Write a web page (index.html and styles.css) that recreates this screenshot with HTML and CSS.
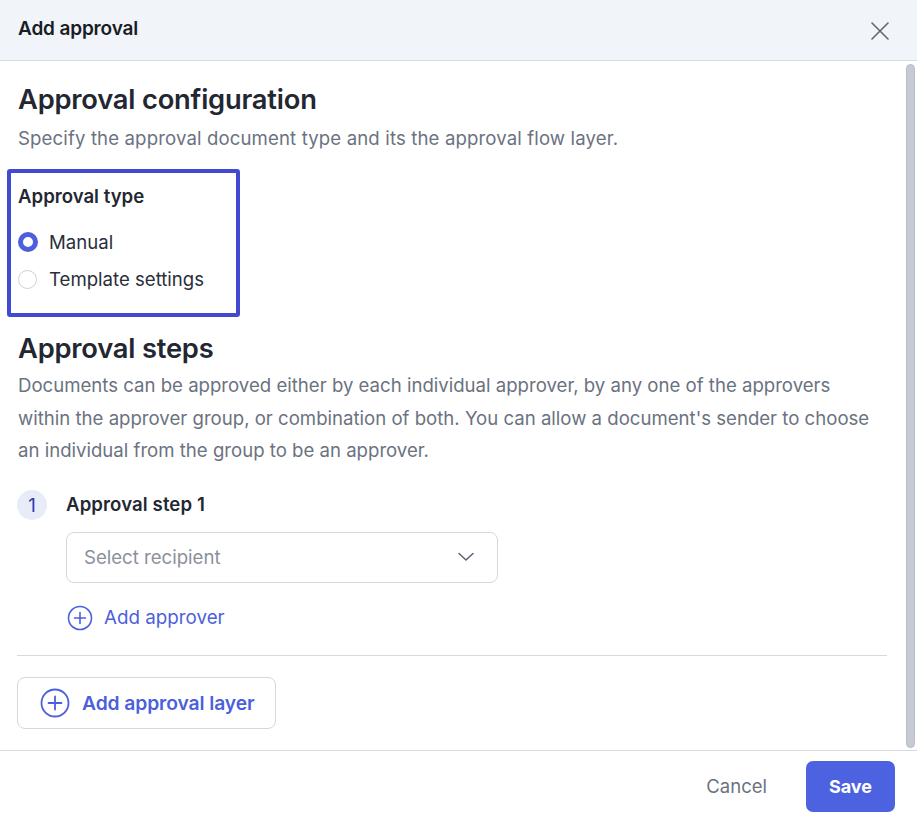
FILE: index.html
```html
<!DOCTYPE html>
<html>
<head>
<meta charset="utf-8">
<link rel="stylesheet" href="styles.css">
</head>
<body>
<div class="dialog">
  <header class="head">
    <div class="title">Add approval</div>
    <svg class="close" width="20" height="20" viewBox="0 0 20 20"><path d="M2 2 L18 18 M18 2 L2 18" stroke="#5f6673" stroke-width="1.6" fill="none" stroke-linecap="round"/></svg>
  </header>
  <div class="body">
    <main class="content">
      <h2 class="h">Approval configuration</h2>
      <p class="sub">Specify the approval document type and its the approval flow layer.</p>
      <div class="typebox">
        <div class="label">Approval type</div>
        <div class="radio"><span class="dot on"></span><span>Manual</span></div>
        <div class="radio"><span class="dot"></span><span>Template settings</span></div>
      </div>
      <h2 class="h h2">Approval steps</h2>
      <p class="desc">Documents can be approved either by each individual approver, by any one of the approvers within the approver group, or combination of both. You can allow a document's sender to choose an individual from the group to be an approver.</p>
      <div class="step">
        <div class="num">1</div>
        <div class="stepcol">
          <div class="steptitle">Approval step 1</div>
          <div class="select"><span>Select recipient</span>
            <svg width="18" height="10" viewBox="0 0 18 10"><path d="M2 1.5 L9 8 L16 1.5" stroke="#5f6673" stroke-width="1.6" fill="none" stroke-linecap="round" stroke-linejoin="round"/></svg>
          </div>
          <div class="addapp">
            <svg width="26" height="26" viewBox="0 0 26 26"><circle cx="13" cy="13" r="11.5" stroke="#4d5fdb" stroke-width="1.6" fill="none"/><path d="M13 7.5 V18.5 M7.5 13 H18.5" stroke="#4d5fdb" stroke-width="1.6" stroke-linecap="round"/></svg>
            <span>Add approver</span>
          </div>
        </div>
      </div>
      <div class="divider"></div>
      <button class="layer">
        <svg width="30" height="30" viewBox="0 0 30 30"><circle cx="15" cy="15" r="13.5" stroke="#4d5fdb" stroke-width="1.8" fill="none"/><path d="M15 8.5 V21.5 M8.5 15 H21.5" stroke="#4d5fdb" stroke-width="1.8" stroke-linecap="round"/></svg>
        <span>Add approval layer</span>
      </button>
    </main>
    <div class="scrollbar"><div class="thumb"></div></div>
  </div>
  <footer class="foot">
    <button class="cancel">Cancel</button>
    <button class="save">Save</button>
  </footer>
</div>
</body>
</html>
```
FILE: styles.css
```css
* { box-sizing: border-box; }
html, body { margin: 0; padding: 0; height: 100%; }
body { font-family: Inter, "Noto Sans", sans-serif; color: #1f2430; background: #fff; }
.dialog { height: 821px; display: flex; flex-direction: column; }
.head { height: 61px; flex: none; background: #f1f4f9; border-bottom: 1px solid #d5d9e0; display: flex; align-items: center; justify-content: space-between; padding: 0 27px 3px 18px; }
.title { font-size: 19px; font-weight: 600; letter-spacing: -0.15px; color: #1a1d24; }
.close { display: block; margin-top: 5px; }
.body { flex: 1; display: flex; overflow: hidden; }
.content { flex: 1; padding: 22px 0 0 18px; min-width: 0; }
.scrollbar { width: 12px; flex: none; padding: 3px 2px 2px 1px; }
.thumb { height: 100%; background: #c6cad3; border: 1px solid #b9bdc7; border-radius: 5px; }
.h { margin: 0; font-size: 27.3px; line-height: 34px; font-weight: 600; color: #222731; letter-spacing: -0.2px; }
.sub { margin: 9px 0 0; font-size: 18.6px; line-height: 24px; color: #6b7280; letter-spacing: 0.13px; }
.typebox { margin: 19px 0 0 -11px; width: 233px; height: 148px; border: 4px solid #4349d1; border-radius: 3px; padding: 11px 0 0 7px; }
.label { font-size: 18.6px; font-weight: 600; line-height: 24px; color: #222731; }
.radio { display: flex; align-items: center; gap: 12px; font-size: 18.6px; line-height: 24px; color: #2a2f3a; margin-top: 13px; }
.typebox .label + .radio { margin-top: 22px; }
.dot { width: 19px; height: 19px; border-radius: 50%; border: 1.5px solid #ccd1da; flex: none; }
.dot.on { border: 5.5px solid #4d5fdb; background: #fff; width: 20px; height: 20px; margin-left: -0.5px; margin-right: -0.5px; }
.h2 { margin-top: 15px; }
.desc { margin: 3px 0 0; font-size: 18.6px; line-height: 32.5px; color: #6b7280; padding-right: 20px; }
.step { display: flex; gap: 19px; margin-top: 23px; }
.num { width: 30px; height: 30px; border-radius: 50%; background: #e8ebf8; color: #2b3bb5; font-size: 18.6px; display: flex; align-items: center; justify-content: center; margin-left: -1px; flex: none; }
.stepcol { display: flex; flex-direction: column; }
.steptitle { font-size: 18.6px; font-weight: 600; line-height: 28px; color: #222731; letter-spacing: 0.1px; }
.select { margin-top: 14px; width: 432px; height: 51px; border: 1px solid #d3d7de; border-radius: 8px; display: flex; align-items: center; justify-content: space-between; padding: 0 22px 0 17px; font-size: 18.6px; color: #8a909b; }
.select svg { display: block; }
.addapp { display: flex; align-items: center; gap: 11px; margin-top: 22px; margin-left: 1px; color: #4d5fdb; font-size: 18.8px; }
.addapp svg { display: block; }
.divider { height: 1px; background: #d5d9e0; margin: 24px 18px 0 -1px; }
.layer { margin: 21px 0 0 -1px; height: 52px; width: 259px; border: 1px solid #d3d7de; border-radius: 8px; background: #fff; display: flex; align-items: center; gap: 12px; padding: 0 0 0 22px; font-family: inherit; font-size: 19.3px; font-weight: 600; color: #4d5fdb; letter-spacing: -0.1px; }
.layer svg { display: block; }
.foot { height: 71px; flex: none; border-top: 1px solid #d5d9e0; display: flex; align-items: center; justify-content: flex-end; gap: 39px; padding: 0 22px 0 0; }
.cancel { background: none; border: 0; font-family: inherit; font-size: 18.5px; color: #6b7280; padding: 0; }
.save { width: 89px; height: 51px; background: #4d62e0; border: 0; border-radius: 7px; color: #fff; font-family: inherit; font-size: 18px; font-weight: 700; }
```
